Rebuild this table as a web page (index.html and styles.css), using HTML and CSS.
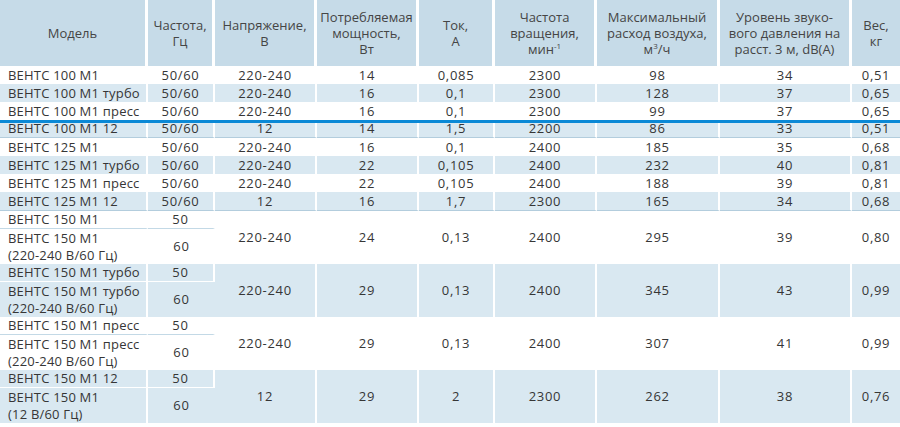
FILE: index.html
```html
<!DOCTYPE html>
<html lang="ru">
<head>
<meta charset="utf-8">
<link rel="stylesheet" href="styles.css">
</head>
<body>
<div class="wrap">
<table class="spec">
<colgroup>
<col class="c1"><col class="c2"><col class="c3"><col class="c4"><col class="c5"><col class="c6"><col class="c7"><col class="c8"><col class="c9">
</colgroup>
<thead>
<tr>
<th>Модель</th>
<th>Частота,<br>Гц</th>
<th>Напряжение,<br>В</th>
<th>Потребляемая<br>мощность,<br>Вт</th>
<th>Ток,<br>А</th>
<th>Частота<br>вращения,<br>мин<sup>-1</sup></th>
<th>Максимальный<br>расход воздуха,<br>м<sup>3</sup>/ч</th>
<th>Уровень звуко-<br>вого давления на<br>расст. 3 м, dB(A)</th>
<th>Вес,<br>кг</th>
</tr>
</thead>
<tbody>
<tr class="r"><td>ВЕНТС 100 М1</td><td>50/60</td><td>220-240</td><td>14</td><td>0,085</td><td>2300</td><td>98</td><td>34</td><td>0,51</td></tr>
<tr class="r alt"><td>ВЕНТС 100 М1 турбо</td><td>50/60</td><td>220-240</td><td>16</td><td>0,1</td><td>2300</td><td>128</td><td>37</td><td>0,65</td></tr>
<tr class="r"><td>ВЕНТС 100 М1 пресс</td><td>50/60</td><td>220-240</td><td>16</td><td>0,1</td><td>2300</td><td>99</td><td>37</td><td>0,65</td></tr>
<tr class="r alt end short"><td>ВЕНТС 100 М1 12</td><td>50/60</td><td>12</td><td>14</td><td>1,5</td><td>2200</td><td>86</td><td>33</td><td>0,51</td></tr>
<tr class="r"><td>ВЕНТС 125 М1</td><td>50/60</td><td>220-240</td><td>16</td><td>0,1</td><td>2400</td><td>185</td><td>35</td><td>0,68</td></tr>
<tr class="r alt"><td>ВЕНТС 125 М1 турбо</td><td>50/60</td><td>220-240</td><td>22</td><td>0,105</td><td>2400</td><td>232</td><td>40</td><td>0,81</td></tr>
<tr class="r"><td>ВЕНТС 125 М1 пресс</td><td>50/60</td><td>220-240</td><td>22</td><td>0,105</td><td>2400</td><td>188</td><td>39</td><td>0,81</td></tr>
<tr class="r alt end"><td>ВЕНТС 125 М1 12</td><td>50/60</td><td>12</td><td>16</td><td>1,7</td><td>2300</td><td>165</td><td>34</td><td>0,68</td></tr>

<tr class="sub"><td class="split">ВЕНТС 150 М1</td><td class="split">50</td><td rowspan="2">220-240</td><td rowspan="2">24</td><td rowspan="2">0,13</td><td rowspan="2">2400</td><td rowspan="2">295</td><td rowspan="2">39</td><td rowspan="2">0,80</td></tr>
<tr class="tall"><td>ВЕНТС 150 М1<br>(220-240 В/60 Гц)</td><td>60</td></tr>

<tr class="sub alt"><td class="split">ВЕНТС 150 М1 турбо</td><td class="split">50</td><td rowspan="2">220-240</td><td rowspan="2">29</td><td rowspan="2">0,13</td><td rowspan="2">2400</td><td rowspan="2">345</td><td rowspan="2">43</td><td rowspan="2">0,99</td></tr>
<tr class="tall alt"><td>ВЕНТС 150 М1 турбо<br>(220-240 В/60 Гц)</td><td>60</td></tr>

<tr class="sub"><td class="split">ВЕНТС 150 М1 пресс</td><td class="split">50</td><td rowspan="2">220-240</td><td rowspan="2">29</td><td rowspan="2">0,13</td><td rowspan="2">2400</td><td rowspan="2">307</td><td rowspan="2">41</td><td rowspan="2">0,99</td></tr>
<tr class="tall"><td>ВЕНТС 150 М1 пресс<br>(220-240 В/60 Гц)</td><td>60</td></tr>

<tr class="sub alt"><td class="split">ВЕНТС 150 М1 12</td><td class="split">50</td><td rowspan="2">12</td><td rowspan="2">29</td><td rowspan="2">2</td><td rowspan="2">2300</td><td rowspan="2">262</td><td rowspan="2">38</td><td rowspan="2">0,76</td></tr>
<tr class="tall alt"><td>ВЕНТС 150 М1<br>(12 В/60 Гц)</td><td>60</td></tr>
</tbody>
</table>
<div class="marker"></div>
</div>
</body>
</html>
```

FILE: styles.css
```css
html, body {
  margin: 0;
  padding: 0;
  background: #ffffff;
}

.wrap {
  position: relative;
  width: 900px;
}

.spec {
  width: 900px;
  table-layout: fixed;
  border-collapse: separate;
  border-spacing: 0;
  font-family: "Open Sans", "Noto Sans", sans-serif;
  font-size: 13px;
  color: #363636;
}

.c1 { width: 148px; }
.c2 { width: 67px; }
.c3 { width: 102px; }
.c4 { width: 102px; }
.c5 { width: 76px; }
.c6 { width: 102px; }
.c7 { width: 123px; }
.c8 { width: 132px; }
.c9 { width: 48px; }

.spec th {
  height: 66px;
  padding: 0 2px;
  background: #c6dbe8;
  border-right: 3px solid #ffffff;
  font-weight: normal;
  line-height: 16px;
  text-align: center;
  vertical-align: middle;
  color: #454545;
}

.spec th:last-child {
  border-right: 0;
}

.spec sup {
  font-size: 8px;
  line-height: 0;
  vertical-align: 5px;
}

.spec td {
  padding: 0;
  text-align: center;
  vertical-align: middle;
  line-height: 17px;
  letter-spacing: 0.7px;
  border-right: 2px solid #ffffff;
  white-space: nowrap;
}

.spec td:last-child {
  border-right: 0;
}

.spec td:first-child {
  text-align: left;
  padding-left: 8px;
  letter-spacing: 0.2px;
}

.r td {
  height: 18px;
}

.short td {
  height: 16px;
}

.end td {
  border-bottom: 1px solid #b3cddd;
}

.alt td {
  background: #d9e8f1;
}

.sub td {
  height: 17px;
}

.sub td.split {
  border-bottom: 1px solid #c3d9e6;
}

.sub.alt td.split {
  border-bottom: 1px solid #ffffff;
}

.tall td {
  height: 35px;
}

.marker {
  position: absolute;
  left: 0;
  top: 120px;
  width: 900px;
  height: 3px;
  background: #0b89d6;
}
```
